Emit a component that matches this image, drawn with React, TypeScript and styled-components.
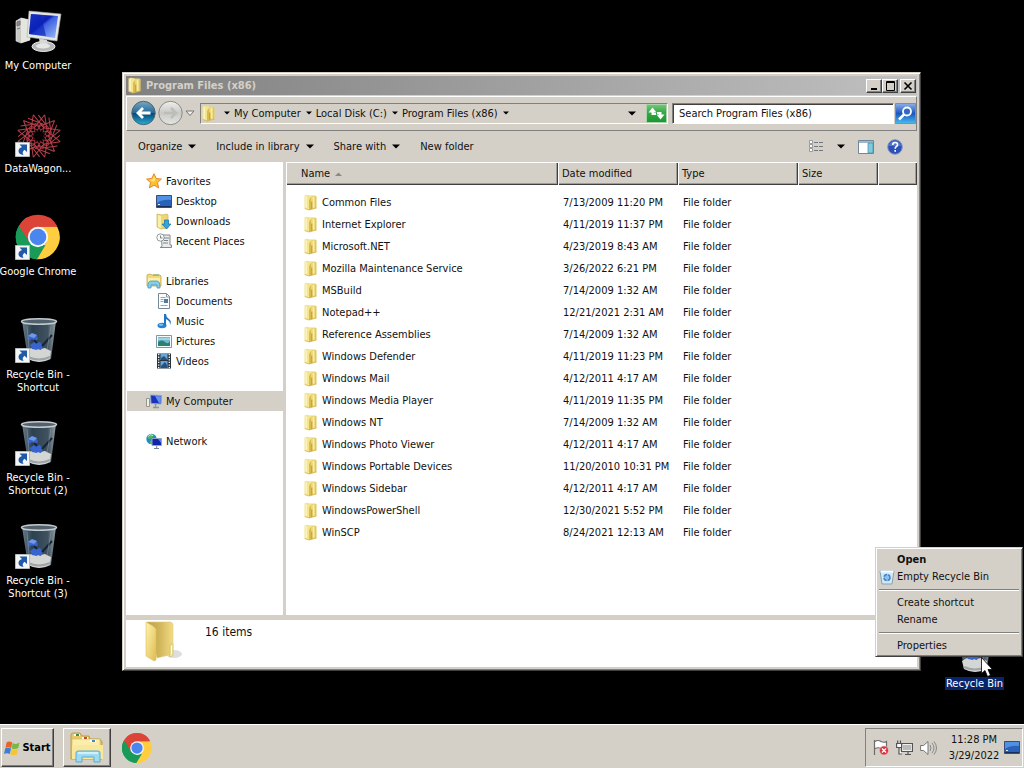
import React from 'react';
import styled, { createGlobalStyle } from 'styled-components';

const face = '#d4d0c8';
const shade = '#808080';
const dark = '#404040';
const uiFont = '"DejaVu Sans Condensed", "Noto Sans", sans-serif';

const GlobalStyle = createGlobalStyle`
  *, *::before, *::after { box-sizing: border-box; }
  body { margin: 0; background: #000; }
  button, input, table { font: inherit; color: inherit; }
  button { margin: 0; padding: 0; border: 0; background: none; white-space: nowrap; }
  a { color: inherit; text-decoration: none; }
  ul { margin: 0; padding: 0; list-style: none; }
  svg { display: block; flex: none; }
`;

const Screen = styled.div`
  position: relative;
  display: flex;
  flex-direction: column;
  min-height: 100vh;
  overflow: hidden;
  background: #000;
  color: #111;
  font-family: ${uiFont};
  font-size: 11px;
  line-height: 13px;
`;

/* ---------- desktop ---------- */

const DesktopArea = styled.main`
  position: relative;
  flex: 1;
  padding-top: 7px;
`;

const Shortcuts = styled.ul`
  width: 76px;
`;

const ShortcutCell = styled.li`
  height: 103px;
`;

const ShortcutLink = styled.a`
  display: flex;
  flex-direction: column;
  align-items: center;
  gap: 4px;
  color: #fff;
  text-align: center;
  white-space: nowrap;
`;

const ShortcutPicture = styled.span`
  position: relative;
  display: block;
  width: 48px;
  height: 48px;
`;

const ArrowBadge = styled.span`
  position: absolute;
  left: 1px;
  bottom: 1px;
`;

const BinOnDesktop = styled.a`
  position: absolute;
  right: 20px;
  bottom: 34px;
  display: flex;
  flex-direction: column;
  align-items: center;
  gap: 3px;
  color: #fff;
`;

const SelectedLabel = styled.span`
  padding: 0 1px;
  background: #0a246a;
`;

const Pointer = styled.span`
  position: absolute;
  right: 31px;
  bottom: 46px;
  z-index: 4;
`;

/* ---------- explorer window ---------- */

const ExplorerWindow = styled.section`
  position: absolute;
  top: 72px;
  right: 103px;
  bottom: 53px;
  left: 122px;
  display: flex;
  flex-direction: column;
  padding: 3px;
  border: 1px solid;
  border-color: ${face} ${dark} ${dark} ${face};
  background: ${face};
  box-shadow: inset 1px 1px #fff, inset -1px -1px ${shade};
`;

const TitleBar = styled.header`
  display: flex;
  align-items: center;
  height: 19px;
  padding: 0 1px;
  background: linear-gradient(90deg, #808080, #c0c0c0);
`;

const WindowTitle = styled.h1`
  flex: 1;
  margin: 0 0 0 3px;
  color: ${face};
  font-size: 11px;
  line-height: 13px;
`;

const CaptionButton = styled.button<{ $apart?: boolean }>`
  display: grid;
  place-items: center;
  width: 16px;
  height: 14px;
  margin-left: ${p => (p.$apart ? 2 : 0)}px;
  border: 1px solid;
  border-color: #fff ${dark} ${dark} #fff;
  background: ${face};
  box-shadow: inset -1px -1px ${shade};
`;

const NavBar = styled.div`
  display: flex;
  align-items: center;
  height: 35px;
  margin-top: 1px;
  padding: 0 0 1px 4px;
  border: 1px solid;
  border-color: #fff ${shade} ${shade} #fff;
`;

const RoundButton = styled.button`
  margin-right: 2px;
`;

const AddressBar = styled.nav`
  display: flex;
  flex: 1;
  align-items: center;
  height: 21px;
  margin: 0 4px 0 5px;
  border: 1px solid;
  border-color: ${shade} #fff #fff ${shade};
`;

const Crumb = styled.a`
  display: flex;
  align-items: center;
  gap: 5px;
  margin-left: 4px;
`;

const CrumbLead = styled.button`
  margin-left: 7px;
`;

const Spacer = styled.span`
  flex: 1;
`;

const HistoryButton = styled.button`
  margin-right: 10px;
`;

const SearchBox = styled.input`
  width: 222px;
  height: 21px;
  margin-right: 1px;
  padding: 0 6px;
  border: 1px solid;
  border-color: ${shade} #fff #fff ${shade};
  border-radius: 0;
  background: #fff;
  box-shadow: inset 1px 1px ${dark};
  outline: 0;
`;

const CommandBar = styled.div`
  display: flex;
  align-items: center;
  height: 31px;
  padding: 0 14px 0 12px;
`;

const Command = styled.button`
  display: flex;
  align-items: center;
  gap: 6px;
  margin-right: 20px;
`;

const ToolIcons = styled.div`
  display: flex;
  align-items: center;
  gap: 13px;
  margin-left: auto;
`;

const WindowBody = styled.div`
  display: flex;
  flex: 1;
  min-height: 0;
  gap: 3px;
`;

const Places = styled.nav`
  width: 157px;
  padding-top: 9px;
  background: #fff;
`;

const PlaceGroup = styled.ul`
  margin-bottom: 20px;
`;

const Place = styled.a<{ $child?: boolean; $current?: boolean }>`
  display: flex;
  align-items: center;
  gap: 4px;
  height: 20px;
  margin-left: 1px;
  padding-left: ${p => (p.$child ? 29 : 19)}px;
  background: ${p => (p.$current ? face : 'transparent')};
`;

const FilePane = styled.div`
  flex: 1;
  background: #fff;
`;

const FileTable = styled.table`
  width: 100%;
  border-collapse: collapse;
  table-layout: fixed;
  text-align: left;

  tbody::before {
    content: '';
    display: block;
    height: 6px;
  }
`;

const HeadCell = styled.th<{ $width?: number; $indent?: number }>`
  width: ${p => (p.$width ? `${p.$width}px` : 'auto')};
  height: 23px;
  padding: 0 0 0 ${p => p.$indent ?? 4}px;
  background: ${face};
  box-shadow: inset 1px 1px #fff, inset -1px -1px ${dark}, inset -2px -2px #a09d97;
  font-weight: normal;
`;

const SortLabel = styled.span`
  display: flex;
  align-items: center;
  gap: 5px;
`;

const Cell = styled.td`
  height: 22px;
  padding: 0 0 0 5px;
  white-space: nowrap;
`;

const FileName = styled.a`
  display: flex;
  align-items: center;
  gap: 3px;
  margin-left: 12px;
`;

const DetailsPane = styled.footer`
  display: flex;
  gap: 21px;
  height: 52px;
  padding-left: 18px;
  border-top: 5px solid ${face};
  background: #fff;
`;

const ItemCount = styled.p`
  margin: 4px 0 0;
  font-size: 12px;
  line-height: 16px;
`;

/* ---------- context menu ---------- */

const ContextMenu = styled.div`
  position: absolute;
  right: 1px;
  bottom: 67px;
  z-index: 3;
  width: 148px;
  padding: 3px 3px 2px;
  border: 1px solid;
  border-color: ${face} ${dark} ${dark} ${face};
  background: ${face};
  box-shadow: inset 1px 1px #fff, inset -1px -1px ${shade};
`;

const MenuItem = styled.button<{ $main?: boolean }>`
  display: flex;
  align-items: center;
  gap: 2px;
  width: 100%;
  height: 17px;
  font-weight: ${p => (p.$main ? 700 : 400)};
`;

const MenuIcon = styled.span`
  width: 16px;
`;

const MenuRule = styled.hr`
  height: 2px;
  margin: 4px 0 3px;
  border: 0;
  border-top: 1px solid ${shade};
  border-bottom: 1px solid #fff;
`;

/* ---------- taskbar ---------- */

const Taskbar = styled.footer`
  display: flex;
  align-items: center;
  height: 44px;
  padding: 2px 1px 0;
  border-top: 1px solid #fff;
  background: ${face};
`;

const TaskButton = styled.button<{ $width: number }>`
  display: flex;
  align-items: center;
  justify-content: center;
  gap: 2px;
  width: ${p => p.$width}px;
  height: 39px;
  border: 1px solid;
  border-color: #fff ${dark} ${dark} #fff;
  box-shadow: inset -1px -1px ${shade};
  color: #000;
  font-weight: 700;
`;

const Launchers = styled.div`
  display: flex;
  flex: 1;
  align-items: center;
  gap: 11px;
  margin-left: 9px;
`;

const Tray = styled.div`
  display: flex;
  align-items: center;
  height: 39px;
  padding: 0 2px 0 7px;
  border: 1px solid;
  border-color: ${shade} #fff #fff ${shade};
`;

const TrayIcons = styled.div`
  display: flex;
  align-items: center;
  gap: 7px;
`;

const Clock = styled.time`
  width: 52px;
  margin: 0 4px 0 11px;
  line-height: 16px;
  text-align: center;
  white-space: nowrap;
`;

/* ---------- drawings ---------- */

const FolderIcon = () => (
  <svg width="16" height="17" viewBox="0 0 16 17">
    <path d="M8 1.500h4.500l1 1V14L8 15.500z" fill="#ead679" />
    <path d="M1.500 1.500 4 .7l4 .8v13.700l-2 .8-4.500-1.500z" fill="#f3e48f" />
    <path d="M2.500 2.500 4 2v12l-1.500-.5z" fill="#fbf4bd" />
    <path d="M6 6l2-3v12.500l-2 .5z" fill="#dcbc4c" />
    <path d="M8 7.500h1.500v7.300L8 15.300z" fill="#c9a63a" />
    <path d="M10.500 3v10.500" stroke="#f7ecab" strokeWidth="1.500" />
    <path d="M12.700 2.500V14" stroke="#dcc258" />
    <path d="M1.700 14.500 6 16l7.500-2" fill="none" stroke="#d0ad43" strokeWidth=".7" />
  </svg>
);

const LargeFolder = () => (
  <svg width="40" height="44" viewBox="0 0 40 44">
    <defs>
      <linearGradient id="folderLeaf" x1="0" x2="1" y2="1"><stop stopColor="#fff3ae" /><stop offset="1" stopColor="#dfbd50" /></linearGradient>
      <linearGradient id="folderBack"><stop stopColor="#bca047" /><stop offset=".5" stopColor="#d2b65c" /><stop offset="1" stopColor="#f3dc85" /></linearGradient>
    </defs>
    <ellipse cx="30" cy="34" rx="8" ry="4" fill="#d0d0d0" opacity=".7" />
    <path d="M3 2 27 2l2 2v30l-16 4z" fill="url(#folderBack)" stroke="#dfca83" strokeWidth=".6" />
    <path d="m2 2 7 4 3 3v31l-2 1L2 36z" fill="url(#folderLeaf)" stroke="#dcbf59" strokeWidth=".6" />
    <path d="M26 24h3v12l-4 1 1-3z" fill="#f4e3a0" stroke="#cdb25c" strokeWidth=".5" />
    <path d="M27.500 26v8" stroke="#fff" />
  </svg>
);

const ComputerIcon = () => (
  <svg width="48" height="48" viewBox="0 0 48 48">
    <defs>
      <linearGradient id="screenBlue" x2="1" y2="1"><stop stopColor="#3151da" /><stop offset=".42" stopColor="#0c1eb4" /><stop offset=".5" stopColor="#3e61e2" /><stop offset="1" stopColor="#9ebcf8" /></linearGradient>
    </defs>
    <path d="m2 14 5-3 9 2v20L7 36l-5-2z" fill="#c8c8c4" stroke="#eee" strokeWidth=".6" />
    <path d="m7 11 9 2v20l-9 3z" fill="#e5e5df" />
    <path d="m3 15 3-1v4l-3 1zM3 22l3-1" fill="#888" stroke="#777" />
    <ellipse cx="29.500" cy="39.500" rx="11.500" ry="5" fill="#b6b8b7" stroke="#eee" />
    <path d="m25 31 8 2 1 6-8-1z" fill="#d7d9d9" />
    <ellipse cx="29" cy="39" rx="7" ry="2.500" fill="#e5e7e5" />
    <path d="m15 4 32 3-4 27-30-4z" fill="#e4e6e4" stroke="#aaa" strokeWidth=".6" />
    <path d="m17 7 27 2-3 22-26-4z" fill="url(#screenBlue)" />
    <path d="m17 7 10 1 5 21-17-2z" fill="#0a22b8" opacity=".65" />
  </svg>
);

const WagonIcon = () => (
  <svg width="48" height="48" viewBox="0 0 48 48">
    <g transform="translate(25 26)" fill="none" stroke="#b8404b" strokeWidth="1">
      {Array.from({ length: 12 }, (_, i) => (
        <g key={i} transform={`rotate(${i * 30 + 15})`}>
          <path d="M0-22 7-6M0-22-7-6M-6-20 6-11" />
          <path d="M0-13q5 3 0 7-5-4 0-7" stroke="#a3343f" />
        </g>
      ))}
      <circle r="5" stroke="#6d222a" strokeDasharray="1 2" />
    </g>
  </svg>
);

const ChromeIcon = ({ size, inset = 0 }: { size: number; inset?: number }) => (
  <svg width={size} height={size} viewBox={`${-inset} ${-inset} ${48 + 2 * inset} ${48 + 2 * inset}`}>
    <path d="M24 24 3.200 12A24 24 0 0 1 44.800 12Z" fill="#dc4437" />
    <path d="M24 24 3.200 12A24 24 0 0 0 24 48Z" fill="#189a58" />
    <path d="M24 13h20.800A24 24 0 0 1 22 48L33.500 29Z" fill="#ffcd40" />
    <path d="M3.200 12 15 30l9-17h20.800A24 24 0 0 0 3.200 12Z" fill="#dc4437" />
    <path d="m3.200 12 10.500 17.500L24 35l8-2-9 15A24 24 0 0 1 3.200 12Z" fill="#189a58" />
    <circle cx="24" cy="24" r="11" fill="#f5f7f7" />
    <circle cx="24" cy="24" r="9" fill="#4a86ee" />
  </svg>
);

const BinIcon = () => (
  <svg width="48" height="48" viewBox="0 0 48 48">
    <defs>
      <linearGradient id="binGlass"><stop stopColor="#697d8b" /><stop offset=".3" stopColor="#2c4151" /><stop offset=".75" stopColor="#40515e" /><stop offset="1" stopColor="#929fa6" /></linearGradient>
    </defs>
    <path d="M8 5h34l-5 38q-10 6-23 0z" fill="url(#binGlass)" />
    <path d="M12 35q5-4 9-3l5 1 5-1 6 3-1 8q-11 6-22 0z" fill="#d4d6d4" />
    <path d="M14 41q11 5 22 0" fill="none" stroke="#9fa4a6" strokeWidth="2" />
    <path d="m13 22 4-4q6-1 7 5l-3 2-3-2-3 2zM16 29l4-3 5 3-2 5-5-1zM22 27l4-1 3 4-2 4-4-1z" fill="#3864cf" />
    <path d="m14 20 4-3 5 2-3 3z" fill="#7297e9" />
    <path d="m28 30 10-11M20 24l3 3" stroke="#172431" strokeWidth="2" />
    <ellipse cx="25" cy="5.500" rx="17.500" ry="2.800" fill="#52616c" stroke="#c3cbd0" strokeWidth="1.500" />
    <path d="M37 10 33 34M13 10l2 22" stroke="#91a4b2" opacity=".5" />
  </svg>
);

const ShortcutArrow = () => (
  <svg width="15" height="15" viewBox="0 0 15 15">
    <path d="M.5.5h14v14H.5z" fill="#f4f5f5" stroke="#b9babb" />
    <path d="M4.500 2.500H12V10L9.500 7.700Q6.500 10 8.500 13 3.500 12.500 3.500 9q0-3 3.500-4z" fill="#205aa7" />
  </svg>
);

const SmallArrow = ({ wide }: { wide?: boolean }) =>
  wide ? (
    <svg width="8" height="5" viewBox="0 0 8 5"><path d="M0 .5h8l-4 4z" fill="#000" /></svg>
  ) : (
    <svg width="6" height="4" viewBox="0 0 6 4"><path d="M0 .5h6l-3 3z" fill="#000" /></svg>
  );

const ArrowCircle = ({ live }: { live?: boolean }) => (
  <svg width="25" height="26" viewBox="0 0 25 26">
    <defs>
      <linearGradient id="liveDisc" x2="0" y2="1"><stop stopColor="#76a8c2" /><stop offset=".48" stopColor="#286b99" /><stop offset=".52" stopColor="#084979" /><stop offset="1" stopColor="#29add2" /></linearGradient>
      <linearGradient id="idleDisc" x2="0" y2="1"><stop stopColor="#eeeeeb" /><stop offset=".5" stopColor="#c9c9c5" /><stop offset="1" stopColor="#e5e5e1" /></linearGradient>
    </defs>
    <circle cx="12.500" cy="13" r="11.700" fill={live ? 'url(#liveDisc)' : 'url(#idleDisc)'} stroke={live ? '#4a6577' : '#8b8b89'} />
    {live ? (
      <path d="M19.500 13H7m5-5-5 5 5 5" fill="none" stroke="#fff" strokeWidth="2.800" />
    ) : (
      <path d="M6 13h12m-5-5 5 5-5 5" fill="none" stroke="#bdbdb9" strokeWidth="2.500" />
    )}
  </svg>
);

const HistoryChevron = () => (
  <svg width="10" height="7" viewBox="0 0 10 7"><path d="M1 1h8L5 5.500z" fill="#eee" stroke="#777" /></svg>
);

const RefreshIcon = () => (
  <svg width="21" height="19" viewBox="0 0 21 19">
    <defs><linearGradient id="refreshGreen" x2="0" y2="1"><stop stopColor="#75c878" /><stop offset=".45" stopColor="#37a746" /><stop offset="1" stopColor="#18992c" /></linearGradient></defs>
    <path d="M.5.5h20v18H.5z" fill="url(#refreshGreen)" stroke="#a9d3aa" />
    <path d="M6.500 3.500 2.500 8.500h3v2.500h4.500V9H8V8.500h2.500zM14.500 15.500l4-5h-3V8H11v2h2v.5h-2.500z" fill="#fff" />
  </svg>
);

const SearchIcon = () => (
  <svg width="21" height="21" viewBox="0 0 21 21">
    <defs><linearGradient id="searchBlue" x2="0" y2="1"><stop stopColor="#8eb0e7" /><stop offset=".5" stopColor="#1c55bd" /><stop offset="1" stopColor="#49bdf0" /></linearGradient></defs>
    <path d="M.5.5h20v20H.5z" fill="url(#searchBlue)" stroke="#778fb3" />
    <circle cx="12" cy="8.500" r="4" fill="#3269c5" stroke="#fff" strokeWidth="1.800" />
    <path d="m9 11.500-5 5" stroke="#fff" strokeWidth="2.500" />
  </svg>
);

const ViewsIcon = () => (
  <svg width="16" height="14" viewBox="0 0 16 14">
    {[1, 5, 9].map(y => (
      <g key={y}>
        <path d={`M1.500 ${y - 0.5}h3v3h-3z`} fill="#fff" stroke="#999" />
        <path d={`M6 ${y + 1.5}h4m1 0h4`} stroke="#6f7880" />
      </g>
    ))}
  </svg>
);

const PreviewIcon = () => (
  <svg width="16" height="14" viewBox="0 0 16 14">
    <path d="M.5.5h15v13H.5z" fill="#fff" stroke="#71889a" />
    <path d="M1 1h14v2H1z" fill="#9fb8c7" />
    <path d="M10 3h5v10h-5z" fill="#7fcbdc" stroke="#3c8fa9" strokeWidth=".7" />
  </svg>
);

const HelpIcon = () => (
  <svg width="16" height="16" viewBox="0 0 16 16">
    <circle cx="8" cy="8" r="7.300" fill="#2c50b8" stroke="#8296c5" />
    <path d="M2 7a6 5 0 0 1 12 0" fill="#6587d5" opacity=".7" />
    <path d="M5.700 6q0-2.500 2.500-2.500T10.500 6Q10.300 7 9 7.800 8.200 8.400 8.200 9.700M8.200 11v1.700" fill="none" stroke="#fff" strokeWidth="1.600" />
  </svg>
);

const StarIcon = () => (
  <svg width="16" height="16" viewBox="0 0 16 16">
    <path d="m8 .7 2.200 4.800 5.200.6-3.900 3.500 1.200 5.300L8 12.200l-4.700 2.700 1.200-5.300L.6 6.100l5.200-.6z" fill="#fbc02f" stroke="#e78631" />
    <path d="m8 3 1.500 3.500L8 9 3 7l3.500-.6z" fill="#ffe36e" />
  </svg>
);

const DesktopIcon = () => (
  <svg width="16" height="13" viewBox="0 0 16 13">
    <path d="M.5.500h15v12H.5z" fill="#2a62ba" stroke="#3a4d76" />
    <path d="M1 1h14v4Q7 4 1 8z" fill="#4f91e2" />
    <path d="M1 11.500h14" stroke="#163059" />
    <path d="M2 9.500h2" stroke="#dceafe" />
  </svg>
);

const DownloadsIcon = () => (
  <svg width="16" height="17" viewBox="0 0 16 17">
    <path d="m1 1 5 1 5-1 1 1v13l-7 1-4-2z" fill="#edd775" stroke="#cdb153" strokeWidth=".7" />
    <path d="m2 2 3 1v12l-3-1z" fill="#fbf0a7" />
    <path d="M8.500 7h4v4H15l-4.500 5L6 11h2.500z" fill="#32a5dc" stroke="#186da5" strokeWidth=".7" />
  </svg>
);

const RecentIcon = () => (
  <svg width="16" height="16" viewBox="0 0 16 16">
    <path d="M5 2h9v10h1.500v2.500H4q2 0 2-2z" fill="#eaebeb" stroke="#85898a" />
    <circle cx="4.500" cy="4.500" r="3.700" fill="#f8fafa" stroke="#929b9e" />
    <path d="M4.500 2.500v2.500h2M8 5h5M8 7.500h4M7 10h5" fill="none" stroke="#7a858a" />
  </svg>
);

const LibrariesIcon = () => (
  <svg width="16" height="16" viewBox="0 0 16 16">
    <path d="M1 2q3-2 5 0h8l1 1v10H1z" fill="#f2da78" stroke="#c3a64c" strokeWidth=".8" />
    <path d="M2 5h12v4H2z" fill="#fff0a8" />
    <path d="M7 2h6" stroke="#73ab62" />
    <path d="M2 15q-.5-7 3-7h6q3 0 3 7h-3v-3H5v3z" fill="#86cdea" stroke="#419bc3" strokeWidth=".8" />
  </svg>
);

const DocumentIcon = () => (
  <svg width="16" height="16" viewBox="0 0 16 16">
    <path d="M2.500.5h8l3 3v12h-11z" fill="#fafcfd" stroke="#75899b" />
    <path d="M4.500 4.500h5M4.500 6.500h3M4.500 8.500h3M4.500 12.500h7" stroke="#8ba8be" />
    <path d="M8 6h4v4H8z" fill="#527b98" />
    <path d="M10.500 1v3h3" fill="none" stroke="#8596a3" />
  </svg>
);

const MusicIcon = () => (
  <svg width="16" height="16" viewBox="0 0 16 16">
    <ellipse cx="6" cy="12.500" rx="4.500" ry="2.800" fill="#2583d3" />
    <path d="M8 12V1h2q0 3 3 5t1 6q.5-4-4-6v6z" fill="#1f75c5" />
    <ellipse cx="5" cy="11.700" rx="2.200" ry="1" fill="#82c6f2" />
  </svg>
);

const PicturesIcon = () => (
  <svg width="16" height="13" viewBox="0 0 16 13">
    <path d="M.5.500h15v12H.5z" fill="#f6fafb" stroke="#8195a2" />
    <path d="M2 2h12v9H2z" fill="#6fb9d5" />
    <path d="M2 7q4-3 7 0t5-1v5H2z" fill="#27826e" />
    <path d="M2 4h12" stroke="#d0eff8" />
  </svg>
);

const VideosIcon = () => (
  <svg width="16" height="16" viewBox="0 0 16 16">
    <path d="M1 .5h14v15H1z" fill="#28333e" />
    <path d="M4.500 1h7v6h-7zM4.500 8h7v7h-7z" fill="#66a9d8" />
    <path d="m5 5 3-2 3 3v1H5zM5 13l4-4 2 3v3H5z" fill="#275083" />
    <path d="M2.700 1v14M13.300 1v14" stroke="#fff" strokeWidth="1.300" strokeDasharray="1.300 1.300" />
  </svg>
);

const SmallComputerIcon = () => (
  <svg width="16" height="16" viewBox="0 0 16 16">
    <path d="M.5 5.500h3v8h-3z" fill="#f0efe4" stroke="#99978d" />
    <path d="m4.500 2 11 .5-.5 8.500-10-.5z" fill="#1832bd" stroke="#8fa4c5" />
    <path d="m9 3 6 .2-.3 6.800-2-.3z" fill="#668eea" />
    <path d="M9.500 11v3M7 14.500h6" stroke="#8a96a5" strokeWidth="1.500" />
  </svg>
);

const NetworkIcon = () => (
  <svg width="16" height="16" viewBox="0 0 16 16">
    <circle cx="5.500" cy="6" r="5.200" fill="#238cc8" />
    <path d="m1 4 4-3 3 1-2 3-3 1zM4 8l4-1-1 4H4z" fill="#55b84f" />
    <path d="M2 3.500q2-3 5-1" stroke="#bce8f2" fill="none" />
    <path d="M6 5.500h9.500v7H6z" fill="#1026a8" stroke="#8fa4c5" />
    <path d="M12 6h3v4z" fill="#5b80e7" />
    <path d="M10.700 13v2.500M8 15.500h5" stroke="#75869c" />
  </svg>
);

const SortMark = () => (
  <svg width="7" height="4" viewBox="0 0 7 4"><path d="M0 4h7L3.500.5z" fill="#8c8982" /></svg>
);

const MenuBinIcon = () => (
  <svg width="16" height="16" viewBox="0 0 16 16">
    <path d="M1 2h14l-2 13H3z" fill="#d4e8f1" stroke="#85a2b2" />
    <path d="M1.500 2.500h13" stroke="#f8ffff" strokeWidth="2" />
    <circle cx="8" cy="8.500" r="3" fill="#8fc0ea" stroke="#3b83ce" strokeWidth="1.500" strokeDasharray="4 1" />
  </svg>
);

const CursorIcon = () => (
  <svg width="12" height="21" viewBox="0 0 12 21">
    <path d="M.5.500v16l3.500-3 2.500 6 3-1.200-2.500-5.800h4.500z" fill="#fff" stroke="#000" strokeWidth=".8" />
  </svg>
);

const WindowsFlag = () => (
  <svg width="16" height="16" viewBox="0 0 16 16">
    <path d="M2.500 2.500Q5 .5 8.300 2.500L7.200 8Q4 6.500 1.500 8z" fill="#e8662c" />
    <path d="M8.700 3Q12 5 15.500 2.500l-1.200 5.500q-3 1.800-6.600.5z" fill="#79b843" />
    <path d="M1.200 8.500Q4 7 7 8.500l-1.200 5.500Q3 12.500 0 14z" fill="#3f7fd0" />
    <path d="M7.500 9q3.500 1.200 6.600 0l-1.200 5.500q-3 1.500-6.600 0z" fill="#f5c537" />
  </svg>
);

const ExplorerIcon = () => (
  <svg width="34" height="33" viewBox="0 0 34 33">
    <path d="M1 4q0-2 2-2h7l2 3h7l1 3h10l2 3v17H1z" fill="#e7c865" stroke="#bd9c41" />
    <path d="M2 8h28v19H2z" fill="#fbedaa" stroke="#d5b75a" strokeWidth=".6" />
    <path d="M4 3h6v2H4zM12 6h6v2h-6zM20 9h6v2h-6z" fill="#fff" />
    <path d="M6 4h3" stroke="#438b4d" strokeWidth="2" />
    <path d="M14 7h3" stroke="#c44a38" strokeWidth="2" />
    <path d="M22 10h3" stroke="#4a86bd" strokeWidth="2" />
    <path d="M2 14h31v14H2z" fill="#f9e79b" />
    <path d="M6 31V22q0-2 2-2h20q2 0 2 2v9h-6v-5H12v5z" fill="#9edaf0" stroke="#58acd2" />
    <path d="M8 22h20" stroke="#e1f8ff" strokeWidth="1.500" />
  </svg>
);

const FlagIcon = () => (
  <svg width="16" height="17" viewBox="0 0 16 17">
    <path d="M1.500 1v15M2 2.500q3-2 6 0 3 1.500 5.500 0v7q-3 1-5.500 0-3-1.500-6 0" fill="#fff" stroke="#6c6c6a" strokeWidth="1.200" />
    <circle cx="11" cy="11.500" r="4.500" fill="#d5333b" stroke="#f2c2c2" strokeWidth=".7" />
    <path d="m9 9.500 4 4m0-4-4 4" stroke="#fff" strokeWidth="1.500" />
  </svg>
);

const LanIcon = () => (
  <svg width="17" height="16" viewBox="0 0 17 16">
    <path d="M5.500 3.500h11v8h-11zM9 14.500h6M12 12v2" fill="#efefec" stroke="#555" strokeWidth="1.200" />
    <path d="M7 5h8v5H7z" fill="#bbb" />
    <path d="M.6 3.500h5v4h-5zM1.700.5v3M4.500.5v3M3 8v6h3" fill="#fff" stroke="#555" strokeWidth="1.200" />
  </svg>
);

const SpeakerIcon = () => (
  <svg width="17" height="16" viewBox="0 0 17 16">
    <path d="M.6 5.500h3L8 1.500v13l-4.400-4h-3z" fill="#fff" stroke="#747472" />
    <path d="M10 5q2 3 0 6M12 3q4 5 0 10M14 1.500q5 6.500 0 13" fill="none" stroke="#888886" />
  </svg>
);

/* ---------- content ---------- */

type Shortcut = { label: string[]; icon: React.ReactNode; linked: boolean };

const shortcuts: Shortcut[] = [
  { label: ['My Computer'], icon: <ComputerIcon />, linked: false },
  { label: ['DataWagon...'], icon: <WagonIcon />, linked: true },
  { label: ['Google Chrome'], icon: <ChromeIcon size={48} inset={2} />, linked: true },
  { label: ['Recycle Bin -', 'Shortcut'], icon: <BinIcon />, linked: true },
  { label: ['Recycle Bin -', 'Shortcut (2)'], icon: <BinIcon />, linked: true },
  { label: ['Recycle Bin -', 'Shortcut (3)'], icon: <BinIcon />, linked: true },
];

type PlaceEntry = { name: string; icon: React.ReactNode };

const placeGroups: PlaceEntry[][] = [
  [
    { name: 'Favorites', icon: <StarIcon /> },
    { name: 'Desktop', icon: <DesktopIcon /> },
    { name: 'Downloads', icon: <DownloadsIcon /> },
    { name: 'Recent Places', icon: <RecentIcon /> },
  ],
  [
    { name: 'Libraries', icon: <LibrariesIcon /> },
    { name: 'Documents', icon: <DocumentIcon /> },
    { name: 'Music', icon: <MusicIcon /> },
    { name: 'Pictures', icon: <PicturesIcon /> },
    { name: 'Videos', icon: <VideosIcon /> },
  ],
  [{ name: 'My Computer', icon: <SmallComputerIcon /> }],
  [{ name: 'Network', icon: <NetworkIcon /> }],
];

const folders: [string, string][] = [
  ['Common Files', '7/13/2009 11:20 PM'],
  ['Internet Explorer', '4/11/2019 11:37 PM'],
  ['Microsoft.NET', '4/23/2019 8:43 AM'],
  ['Mozilla Maintenance Service', '3/26/2022 6:21 PM'],
  ['MSBuild', '7/14/2009 1:32 AM'],
  ['Notepad++', '12/21/2021 2:31 AM'],
  ['Reference Assemblies', '7/14/2009 1:32 AM'],
  ['Windows Defender', '4/11/2019 11:23 PM'],
  ['Windows Mail', '4/12/2011 4:17 AM'],
  ['Windows Media Player', '4/11/2019 11:35 PM'],
  ['Windows NT', '7/14/2009 1:32 AM'],
  ['Windows Photo Viewer', '4/12/2011 4:17 AM'],
  ['Windows Portable Devices', '11/20/2010 10:31 PM'],
  ['Windows Sidebar', '4/12/2011 4:17 AM'],
  ['WindowsPowerShell', '12/30/2021 5:52 PM'],
  ['WinSCP', '8/24/2021 12:13 AM'],
];

const Explorer = () => (
  <ExplorerWindow aria-label="Program Files (x86)">
    <TitleBar>
      <FolderIcon />
      <WindowTitle>Program Files (x86)</WindowTitle>
      <CaptionButton aria-label="Minimize">
        <svg width="12" height="10"><path d="M3 8h6" stroke="#000" strokeWidth="2" /></svg>
      </CaptionButton>
      <CaptionButton aria-label="Maximize">
        <svg width="12" height="10"><path d="M2.500.500h8v9h-8zM2 1.500h9" fill="none" stroke="#000" /></svg>
      </CaptionButton>
      <CaptionButton aria-label="Close" $apart>
        <svg width="12" height="10"><path d="m2.500 1.500 7 7m0-7-7 7" stroke="#000" strokeWidth="1.600" /></svg>
      </CaptionButton>
    </TitleBar>
    <NavBar>
      <RoundButton aria-label="Back"><ArrowCircle live /></RoundButton>
      <RoundButton aria-label="Forward"><ArrowCircle /></RoundButton>
      <button aria-label="Recent pages"><HistoryChevron /></button>
      <AddressBar aria-label="Address">
        <FolderIcon />
        <CrumbLead aria-label="Show locations"><SmallArrow /></CrumbLead>
        {['My Computer', 'Local Disk (C:)', 'Program Files (x86)'].map(name => (
          <Crumb href="#" key={name}>{name}<SmallArrow /></Crumb>
        ))}
        <Spacer />
        <HistoryButton aria-label="Previous locations"><SmallArrow wide /></HistoryButton>
        <button aria-label="Refresh"><RefreshIcon /></button>
      </AddressBar>
      <SearchBox aria-label="Search" defaultValue="Search Program Files (x86)" />
      <button aria-label="Start search"><SearchIcon /></button>
    </NavBar>
    <CommandBar>
      <Command>Organize<SmallArrow wide /></Command>
      <Command>Include in library<SmallArrow wide /></Command>
      <Command>Share with<SmallArrow wide /></Command>
      <Command>New folder</Command>
      <ToolIcons>
        <button aria-label="Change view"><ViewsIcon /></button>
        <button aria-label="More views"><SmallArrow wide /></button>
        <button aria-label="Preview pane"><PreviewIcon /></button>
        <button aria-label="Help"><HelpIcon /></button>
      </ToolIcons>
    </CommandBar>
    <WindowBody>
      <Places aria-label="Places">
        {placeGroups.map(group => (
          <PlaceGroup key={group[0].name}>
            {group.map((place, i) => (
              <li key={place.name}>
                <Place href="#" $child={i > 0} $current={place.name === 'My Computer'}>
                  {place.icon}
                  {place.name}
                </Place>
              </li>
            ))}
          </PlaceGroup>
        ))}
      </Places>
      <FilePane>
        <FileTable>
          <thead>
            <tr>
              <HeadCell $width={272} $indent={15}><SortLabel>Name<SortMark /></SortLabel></HeadCell>
              <HeadCell $width={120}>Date modified</HeadCell>
              <HeadCell $width={120}>Type</HeadCell>
              <HeadCell $width={80}>Size</HeadCell>
              <HeadCell aria-label="More columns" />
            </tr>
          </thead>
          <tbody>
            {folders.map(([name, date]) => (
              <tr key={name}>
                <Cell><FileName href="#"><FolderIcon />{name}</FileName></Cell>
                <Cell>{date}</Cell>
                <Cell>File folder</Cell>
                <Cell />
                <Cell />
              </tr>
            ))}
          </tbody>
        </FileTable>
      </FilePane>
    </WindowBody>
    <DetailsPane>
      <LargeFolder />
      <ItemCount>16 items</ItemCount>
    </DetailsPane>
  </ExplorerWindow>
);

export default function App() {
  return (
    <Screen>
      <GlobalStyle />
      <DesktopArea>
        <Shortcuts>
          {shortcuts.map(({ label, icon, linked }) => (
            <ShortcutCell key={label.join(' ')}>
              <ShortcutLink href="#">
                <ShortcutPicture>
                  {icon}
                  {linked && <ArrowBadge><ShortcutArrow /></ArrowBadge>}
                </ShortcutPicture>
                <span>
                  {label.map((line, i) => (
                    <React.Fragment key={line}>{i > 0 && <br />}{line}</React.Fragment>
                  ))}
                </span>
              </ShortcutLink>
            </ShortcutCell>
          ))}
        </Shortcuts>
        <Explorer />
        <BinOnDesktop href="#">
          <BinIcon />
          <SelectedLabel>Recycle Bin</SelectedLabel>
        </BinOnDesktop>
        <ContextMenu role="menu">
          <MenuItem role="menuitem" $main><MenuIcon />Open</MenuItem>
          <MenuItem role="menuitem"><MenuIcon><MenuBinIcon /></MenuIcon>Empty Recycle Bin</MenuItem>
          <MenuRule />
          <MenuItem role="menuitem"><MenuIcon />Create shortcut</MenuItem>
          <MenuItem role="menuitem"><MenuIcon />Rename</MenuItem>
          <MenuRule />
          <MenuItem role="menuitem"><MenuIcon />Properties</MenuItem>
        </ContextMenu>
        <Pointer><CursorIcon /></Pointer>
      </DesktopArea>
      <Taskbar>
        <TaskButton $width={53}><WindowsFlag />Start</TaskButton>
        <Launchers>
          <TaskButton $width={48} aria-label="Windows Explorer"><ExplorerIcon /></TaskButton>
          <button aria-label="Google Chrome"><ChromeIcon size={30} /></button>
        </Launchers>
        <Tray>
          <TrayIcons>
            <button aria-label="Action Center"><FlagIcon /></button>
            <button aria-label="Network"><LanIcon /></button>
            <button aria-label="Volume"><SpeakerIcon /></button>
          </TrayIcons>
          <Clock>11:28 PM<br />3/29/2022</Clock>
          <button aria-label="Show desktop"><DesktopIcon /></button>
        </Tray>
      </Taskbar>
    </Screen>
  );
}
